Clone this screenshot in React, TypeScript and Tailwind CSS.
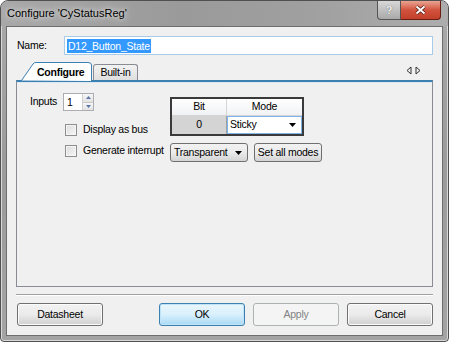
import React from "react";

const font = { fontFamily: '"Liberation Sans", Arial, sans-serif' };

function WinButton({ label, variant }: { label: string; variant?: "default" | "disabled" }) {
  const base = "h-[23px] w-[86px] rounded-[3px] border text-[10.5px] flex items-center justify-center";
  if (variant === "default")
    return (
      <div className={`${base} border-[#3c7fb1] bg-gradient-to-b from-[#eaf6fd] via-[#d9f0fc] to-[#a7d9f5] text-black shadow-[inset_0_0_0_1px_#bfe4f7]`}>
        {label}
      </div>
    );
  if (variant === "disabled")
    return <div className={`${base} border-[#adb2b5] bg-[#f4f4f4] text-[#838383]`}>{label}</div>;
  return (
    <div className={`${base} border-[#707070] bg-gradient-to-b from-[#f2f2f2] via-[#ebebeb] to-[#cfcfcf] text-black shadow-[inset_0_0_0_1px_#fcfcfc]`}>
      {label}
    </div>
  );
}

function Checkbox({ label }: { label: string }) {
  return (
    <div className="flex items-center h-[13px] whitespace-nowrap">
      <div className="w-[12px] h-[12px] shrink-0 border border-[#8e8f8f] bg-gradient-to-br from-[#dcdcdc] to-[#f7f7f7] shadow-[inset_0_0_0_1px_#f4f4f4]" />
      <span className="ml-[6px]">{label}</span>
    </div>
  );
}

function Arrow() {
  return (
    <svg width="7" height="4" viewBox="0 0 7 4">
      <path d="M0 0h7L3.5 4z" fill="#000" />
    </svg>
  );
}

export default function App() {
  return (
    <div className="w-[449px] h-[342px] text-black text-[10.5px] tracking-[-0.25px] whitespace-nowrap" style={font}>
      <div className="w-[449px] h-[342px] rounded-t-[8px] rounded-b-[4px] border border-[#505050] bg-gradient-to-b from-[#a9a9a9] via-[#9b9b9b] to-[#a4a4a4] shadow-[inset_0_0_0_1px_#d8d8d8] relative flex flex-col">
        {/* title bar */}
        <div className="h-[25px] flex items-center pl-[6px] bg-[linear-gradient(90deg,#a8a8a8_0%,#9a9a9a_40%,#a0a0a0_70%,#adadad_100%)] rounded-t-[7px]">
          <span className="text-[11px] tracking-normal text-black [text-shadow:0_0_8px_#e0e0e0,0_0_4px_#e0e0e0]">Configure 'CyStatusReg'</span>
        </div>
        <div className="absolute top-0 right-[7px] flex">
          <div className="w-[24px] h-[19px] rounded-bl-[4px] border border-[#555] border-t-0 bg-gradient-to-b from-[#d8d8d8] to-[#a9a9a9] flex items-center justify-center text-[11px] font-bold text-[#f4f4f4] [text-shadow:0_0_1px_#444]">
            ?
          </div>
          <div className="w-[40px] h-[19px] rounded-br-[4px] border border-l-0 border-[#6b1b12] border-t-0 bg-gradient-to-b from-[#e8a493] via-[#d2523d] to-[#c3402a] flex items-center justify-center">
            <svg width="11" height="10" viewBox="0 0 11 10">
              <path d="M1.5 1.5l8 7M9.5 1.5l-8 7" stroke="#4a140d" strokeWidth="3.4" />
              <path d="M1.5 1.5l8 7M9.5 1.5l-8 7" stroke="#fff" strokeWidth="2" />
            </svg>
          </div>
        </div>

        {/* client area */}
        <div className="mx-[5px] h-[310px] border border-[#6e6e6e] bg-[#f0f0f0] flex flex-col px-[9px]">
          {/* name row */}
          <div className="flex items-center mt-[9px] h-[19px]">
            <span className="ml-[1px] w-[47px]">Name:</span>
            <div className="flex-1 h-[19px] border border-[#a8cbe9] bg-white flex items-center pl-[2px]">
              <span className="bg-[#3399ff] text-white leading-[14px] px-[1px]">D12_Button_State</span>
            </div>
          </div>

          {/* tabs */}
          <div className="mt-[7px] flex items-end h-[18px] relative">
            <div className="ml-[5px] h-[18px] w-[71px] relative">
              <svg width="71" height="19" viewBox="0 0 71 19" className="absolute top-0 left-0">
                <path d="M0.5 18.5 L12 2 Q13 0.5 15 0.5 H67 Q70.5 0.5 70.5 3 V19" fill="#fff" stroke="#3c7fb1" />
              </svg>
              <span className="absolute left-[16px] top-[3px] font-bold">Configure</span>
            </div>
            <div className="h-[16px] w-[45px] ml-[1px] border border-b-0 border-[#898c95] rounded-t-[3px] bg-gradient-to-b from-[#f2f2f2] to-[#dfdfdf] flex items-center justify-center">
              <span>Built-in</span>
            </div>
            <div className="absolute right-[12px] top-[4px] flex gap-[3px]">
              <svg width="6" height="9" viewBox="0 0 6 9"><path d="M5 1v7L1 4.5z" fill="none" stroke="#333" /></svg>
              <svg width="6" height="9" viewBox="0 0 6 9"><path d="M1 1v7l4-3.5z" fill="none" stroke="#333" /></svg>
            </div>
          </div>

          {/* tab panel */}
          <div className="h-[207px] border border-[#898c95] border-t-[#3c7fb1] border-t-2 bg-[#f0f0f0] shadow-[inset_0_1px_0_#dce9f5] flex pl-[13px] pt-[11px]">
            <div className="w-[140px] flex flex-col">
              <div className="flex items-center h-[18px]">
                <span className="w-[33px]">Inputs</span>
                <div className="w-[31px] h-[18px] border border-[#abadb3] bg-white flex">
                  <span className="flex-1 pl-[3px] leading-[16px]">1</span>
                  <div className="w-[11px] flex flex-col border-l border-[#d0d0d0]">
                    <div className="flex-1 bg-gradient-to-b from-[#f7f7f7] to-[#e3e3e3] border-b border-[#c8c8c8] flex items-center justify-center">
                      <svg width="5" height="3" viewBox="0 0 5 3"><path d="M0 3h5L2.5 0z" fill="#5a76a8" /></svg>
                    </div>
                    <div className="flex-1 bg-gradient-to-b from-[#f7f7f7] to-[#e3e3e3] flex items-center justify-center">
                      <svg width="5" height="3" viewBox="0 0 5 3"><path d="M0 0h5L2.5 3z" fill="#5a76a8" /></svg>
                    </div>
                  </div>
                </div>
              </div>
              <div className="ml-[35px] mt-[12px]">
                <Checkbox label="Display as bus" />
              </div>
              <div className="ml-[35px] mt-[8px]">
                <Checkbox label="Generate interrupt" />
              </div>
            </div>

            <div className="flex flex-col pt-[4px]">
              {/* table */}
              <div className="w-[134px] border-2 border-[#3a3a3a] bg-white">
                <div className="flex h-[17px] bg-gradient-to-b from-[#ffffff] to-[#f1f2f4] border-b border-[#d5d5d5]">
                  <div className="w-[55px] border-r border-[#d5d5d5] flex items-center justify-center">Bit</div>
                  <div className="flex-1 flex items-center justify-center">Mode</div>
                </div>
                <div className="flex h-[18px]">
                  <div className="w-[55px] bg-[#d4d4d4] border-r border-[#a0a0a0] flex items-center justify-center">0</div>
                  <div className="flex-1 border border-[#7eb4ea] bg-white flex items-center justify-between pl-[2px] pr-[5px]">
                    <span>Sticky</span>
                    <Arrow />
                  </div>
                </div>
              </div>
              <div className="flex mt-[7px] gap-[6px]">
                <div className="w-[78px] h-[19px] rounded-[3px] border border-[#707070] bg-gradient-to-b from-[#f2f2f2] via-[#ebebeb] to-[#d4d4d4] flex items-center justify-between pl-[3px] pr-[5px]">
                  <span>Transparent</span>
                  <Arrow />
                </div>
                <div className="w-[68px] h-[19px] rounded-[3px] border border-[#707070] bg-gradient-to-b from-[#f2f2f2] via-[#ebebeb] to-[#d4d4d4] flex items-center justify-center">
                  <span>Set all modes</span>
                </div>
              </div>
            </div>
          </div>

          {/* separator */}
          <div className="mt-[7px] h-[2px] border-t border-[#a0a0a0] border-b-white border-b" />

          {/* buttons */}
          <div className="mt-[7px] flex items-center">
            <div className="ml-[1px]">
              <WinButton label="Datasheet" />
            </div>
            <div className="ml-auto flex gap-[8px]">
              <WinButton label="OK" variant="default" />
              <WinButton label="Apply" variant="disabled" />
              <WinButton label="Cancel" />
            </div>
          </div>
        </div>
      </div>
    </div>
  );
}
